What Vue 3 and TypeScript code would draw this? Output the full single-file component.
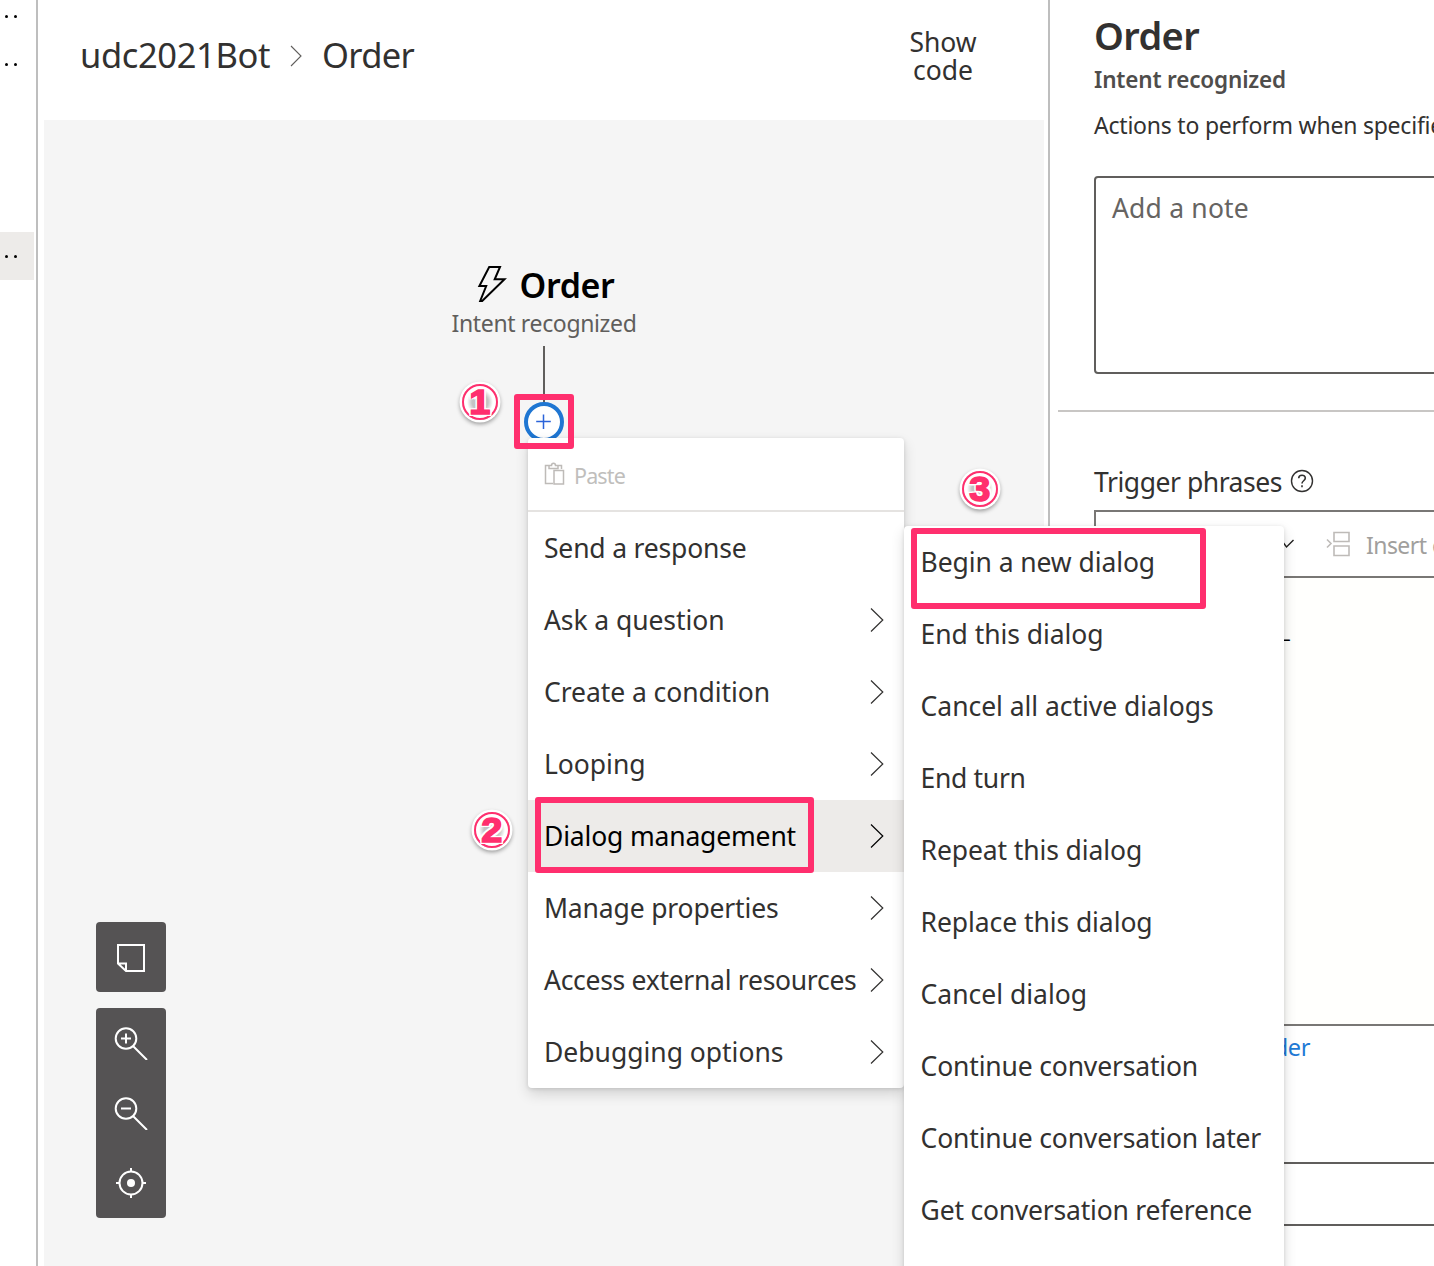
<script setup lang="ts">
interface Item { label: string; w: number; sub?: boolean; active?: boolean }

const actions: Item[] = [
  { label: 'Send a response', w: 202.5 },
  { label: 'Ask a question', w: 180.5, sub: true },
  { label: 'Create a condition', w: 226, sub: true },
  { label: 'Looping', w: 101.5, sub: true },
  { label: 'Dialog management', w: 252, sub: true, active: true },
  { label: 'Manage properties', w: 234.5, sub: true },
  { label: 'Access external resources', w: 312.5, sub: true },
  { label: 'Debugging options', w: 239.5, sub: true },
]
const dialogActions: Item[] = [
  { label: 'Begin a new dialog', w: 234.5 },
  { label: 'End this dialog', w: 183 },
  { label: 'Cancel all active dialogs', w: 293 },
  { label: 'End turn', w: 105 },
  { label: 'Repeat this dialog', w: 221.5 },
  { label: 'Replace this dialog', w: 232 },
  { label: 'Cancel dialog', w: 166.5 },
  { label: 'Continue conversation', w: 277.5 },
  { label: 'Continue conversation later', w: 340.5 },
  { label: 'Get conversation reference', w: 331.5 },
]
const steps = [
  { n: '1', cls: 'one' },
  { n: '2', cls: 'two' },
  { n: '3', cls: 'three' },
]

/* Tracks a label out or in so that it fills the given width. */
const vFit = {
  mounted(el: HTMLElement, binding: { value: number }) {
    const natural = el.getBoundingClientRect().width
    const count = (el.textContent ?? '').trim().length
    el.style.letterSpacing = `${(binding.value - natural) / count}px`
  },
}
</script>

<template>
  <div class="app">
    <aside class="rail">
      <div class="row"><i /><i /></div>
      <div class="row"><i /><i /></div>
      <div class="row gap" />
      <div class="row selected"><i /><i /></div>
    </aside>

    <main class="editor">
      <header class="head">
        <nav class="crumbs">
          <span v-fit="190">udc2021Bot</span>
          <svg width="12" height="22" viewBox="0 0 12 22"><path d="M1 1l10 10L1 21" fill="none" stroke="#605e5c" stroke-width="1.1" /></svg>
          <span v-fit="92">Order</span>
        </nav>
        <button class="code"><span v-fit="67">Show</span><span v-fit="60">code</span></button>
      </header>

      <section class="canvas">
        <div class="trigger">
          <div class="title">
            <svg width="30" height="38" viewBox="0 0 30 38"><path d="M12.2 2H23l-5.300 12.300H27.500L5.200 36h-2l6-15H2.400z" fill="none" stroke="#000" stroke-width="2" /></svg>
            <b v-fit="95">Order</b>
          </div>
          <div class="kind"><span v-fit="185">Intent recognized</span></div>
          <div class="line" />
          <div class="plus">
            <svg width="16" height="16" viewBox="0 0 16 16"><path d="M7.500 .5v14.500M.2 7.500h14.600" stroke="#2b63d9" stroke-width="1.500" /></svg>
          </div>
        </div>

        <div class="tools">
          <div class="tool">
            <svg width="32" height="32" viewBox="0 0 32 32"><path d="M3 4h26v26H11L3 22.500zM3 22.500h8V30" /></svg>
          </div>
          <div class="tool group">
            <svg width="34" height="34" viewBox="0 0 34 34"><circle cx="12" cy="12.500" r="10.300" /><path d="M19 20l14 14M12 7.500v10M7 12.500h10" /></svg>
            <svg width="34" height="34" viewBox="0 0 34 34"><circle cx="12" cy="12.500" r="10.300" /><path d="M19 20l14 14M7 12.500h10" /></svg>
            <svg width="34" height="34" viewBox="0 0 34 34"><circle cx="17" cy="17" r="11.500" /><circle cx="17" cy="17" r="4" class="dot" /><path d="M17 2v4M17 28v4M2 17h4M28 17h4" /></svg>
          </div>
        </div>
      </section>
    </main>

    <aside class="panel">
      <div class="intro">
        <h1><span v-fit="105">Order</span></h1>
        <h2><span v-fit="192">Intent recognized</span></h2>
        <p><span v-fit="363">Actions to perform when specified</span></p>
        <div class="note"><span v-fit="137">Add a note</span></div>
      </div>
      <div class="phrases">
        <label class="lab">
          <span v-fit="188">Trigger phrases</span>
          <svg width="24" height="24" viewBox="0 0 24 24"><circle cx="12" cy="12" r="10.500" fill="none" stroke="#323130" stroke-width="1.400" /><path d="M8.700 9.300c0-4 6.600-4 6.600-.2 0 2.600-3.300 2.700-3.300 5.400M12 16.300v2" fill="none" stroke="#323130" stroke-width="1.600" /></svg>
        </label>
        <div class="box">
          <div class="bar">
            <svg width="14" height="10" viewBox="0 0 14 10"><path d="M1 2l4.500 6L12.500 1" fill="none" stroke="#201f1e" stroke-width="1.400" /></svg>
            <svg class="ins" width="24" height="26" viewBox="0 0 24 26"><path d="M1 8.500l4 4-4 4M8 1.500h15v9H8zM8 15h15v9.500H8z" fill="none" stroke="#bebbb8" stroke-width="1.600" /></svg>
            <span v-fit="124">Insert entity</span>
          </div>
          <div class="code-area"><span>_</span></div>
        </div>
        <div class="link"><span v-fit="59">order</span></div>
        <div class="field" />
      </div>
    </aside>

    <div class="menu first">
      <div class="item paste">
        <svg width="22" height="24" viewBox="0 0 22 24"><path d="M9 21.500H1.500V3.500H5M14 3.500h3.500V7M5 6.500h9v-3h-2.500c0-3-4-3-4 0H5zM10 8.500h9.500v13.500H10z" fill="none" stroke="#bebbb8" stroke-width="1.500" /></svg>
        <span v-fit="51">Paste</span>
      </div>
      <div v-for="a in actions" :key="a.label" class="item" :class="{ active: a.active }">
        <span v-fit="a.w">{{ a.label }}</span>
        <svg v-if="a.sub" width="14" height="26" viewBox="0 0 14 26"><path d="M1 1.500L12.800 13 1 24.500" fill="none" stroke="currentColor" stroke-width="1.200" /></svg>
      </div>
    </div>
    <div class="menu second">
      <div v-for="a in dialogActions" :key="a.label" class="item"><span v-fit="a.w">{{ a.label }}</span></div>
    </div>

    <div class="mark m1" />
    <div class="mark m2" />
    <div class="mark m3" />
    <div v-for="s in steps" :key="s.n" class="step" :class="s.cls"><span>{{ s.n }}</span></div>
  </div>
</template>

<style>
body { margin: 0; overflow: hidden; }
</style>

<style scoped>
.app {
  position: relative;
  display: grid;
  grid-template-columns: 36px 1012px 386px;
  width: 1434px;
  height: 1266px;
  overflow: hidden;
  background: #fff;
  color: #323130;
  font-family: "Noto Sans", "Open Sans", sans-serif;
  font-size: 26.5px;
  white-space: nowrap;
}
.app * { box-sizing: border-box; }
svg { display: block; flex: none; }
.rail { display: flex; flex-direction: column; margin-top: -8px; }
.row { display: flex; align-items: center; gap: 6px; width: 34px; height: 48px; padding-left: 4.500px; }
.row i { width: 3px; height: 3px; border-radius: 50%; background: #000; }
.row.gap { height: 144px; }
.row.selected { background: #edebe9; }
.editor { width: 1014px; border-left: 2px solid #bebebe; border-right: 2px solid #bebebe; }
.head { display: flex; justify-content: space-between; height: 120px; }
.crumbs { display: flex; align-items: center; height: 108px; padding-left: 42px; font-size: 34.500px; }
.crumbs svg { margin: 4px 20px 0 20px; }
.code { display: flex; flex-direction: column; align-items: center; justify-content: center; width: 120px; height: 112px; margin-right: 45px; padding: 0; border: 0; background: none; color: inherit; font: inherit; line-height: 28px; }
.canvas { position: relative; height: 1146px; margin: 0 4px 0 6px; background: #f5f5f5; }
.trigger { position: absolute; left: 350px; top: 143px; display: flex; flex-direction: column; align-items: center; width: 300px; color: #000; }
.title { display: flex; align-items: center; gap: 13px; height: 44px; margin-left: 3px; font-size: 34px; }
.title svg { margin-top: -2px; }
.title b { font-weight: 600; }
.kind { height: 39px; line-height: 33px; font-size: 23px; color: #605e5c; }
.line { width: 2px; height: 56px; background: #605e5c; }
.plus { display: grid; place-items: center; width: 40px; height: 40px; border: 4px solid #1f76d2; border-radius: 50%; background: #fff; }
.tools { position: absolute; left: 52px; top: 802px; display: flex; flex-direction: column; gap: 16px; }
.tool { display: grid; place-items: center; width: 70px; height: 70px; border-radius: 4px; background: #555354; }
.tool.group { grid-template-rows: 70px 70px 70px; height: 210px; }
.tool svg { fill: none; stroke: #fff; stroke-width: 2; }
.tool .dot { fill: #fff; stroke: none; }
.panel { width: 386px; padding-left: 10px; overflow: hidden; }
.intro { height: 412px; padding-left: 36px; border-bottom: 2px solid #c8c6c4; }
h1, h2, p { margin: 0; }
h1 { height: 62px; line-height: 70px; font-size: 38px; font-weight: 600; }
h2 { height: 36px; line-height: 36px; font-size: 22.500px; font-weight: 600; color: #4f4d4b; }
p { height: 78px; line-height: 54px; font-size: 23px; }
.note { width: 400px; height: 198px; padding: 11px 16px; border: 2px solid #605e5c; border-radius: 4px; line-height: 38px; color: #666462; }
.phrases { padding-left: 36px; }
.lab { display: flex; align-items: center; gap: 8px; height: 98px; padding-top: 42px; }
.lab svg { margin-top: -2px; }
.box { width: 400px; height: 516px; border: 2px solid #797775; }
.bar { display: flex; align-items: center; height: 66px; padding-left: 185px; border-bottom: 2px solid #797775; font-size: 23px; color: #a19f9d; }
.bar span { margin-top: 2px; }
.ins { margin: 0 16px 0 31px; }
.code-area { height: 446px; padding: 35px 0 0 184px; background: #fffffd; color: #000; line-height: 30px; font-size: 24px; font-weight: 700; }
.link { height: 136px; padding: 6px 0 0 157px; line-height: 31px; font-size: 23.500px; color: #1f7ad6; }
.field { width: 400px; height: 64px; border: 2px solid #605e5c; }
.menu { position: absolute; background: #fff; border-radius: 4px; box-shadow: 0 6px 14px rgba(0,0,0,.14), 0 1px 4px rgba(0,0,0,.12); }
.first { left: 528px; top: 438px; width: 376px; height: 650px; }
.second { left: 904px; top: 526px; width: 380px; height: 800px; }
.item { display: flex; align-items: center; justify-content: space-between; height: 72px; padding: 0 20px 0 16px; }
.second .item { padding-left: 16.600px; }
.item.active { background: #edebe9; color: #000; }
.item.paste { justify-content: flex-start; gap: 8px; height: 74px; border-bottom: 2px solid #e5e3e1; color: #c0bebc; font-size: 21.500px; }
.item.paste span { margin-top: 3px; }
.mark { position: absolute; border: 6px solid #ff2f6e; border-radius: 3px; }
.m1 { left: 514px; top: 394px; width: 60px; height: 55px; }
.m2 { left: 534.500px; top: 797px; width: 279.500px; height: 76px; }
.m3 { left: 910.500px; top: 527.500px; width: 295px; height: 81px; }
.step {
  position: absolute;
  display: grid;
  place-items: center;
  width: 36px;
  height: 36px;
  border: 2px solid #ff2f6e;
  border-radius: 50%;
  background: radial-gradient(circle, #c4c4c4 0 8px, #fff 13px);
  box-shadow: 0 0 0 2.500px #fff, 0 2px 4px 2px rgba(0,0,0,.4);
  color: #ff2f6e;
  font-family: "Liberation Sans", sans-serif;
  font-size: 35px;
  font-weight: 700;
  line-height: 32px;
}
.step span {
  transform: scaleX(1.08);
  -webkit-text-stroke: 1.600px #ff2f6e;
  text-shadow: -2px 0 #fff, 2px 0 #fff, 0 -2px #fff, 0 2px #fff, -2px -2px #fff, 2px 2px #fff, -2px 2px #fff, 2px -2px #fff;
}
.one { left: 462px; top: 384px; }
.two { left: 474px; top: 812px; }
.three { left: 962px; top: 471px; }
</style>
